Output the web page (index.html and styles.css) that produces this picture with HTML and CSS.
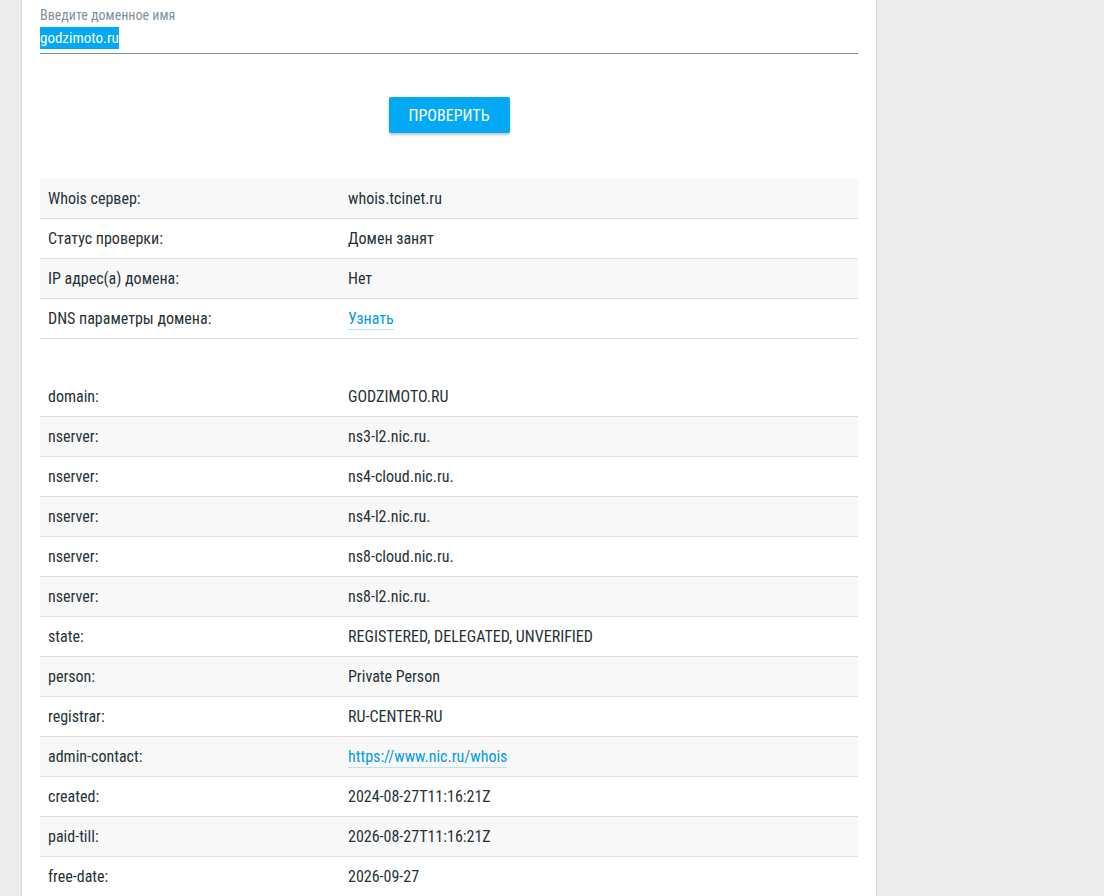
FILE: index.html
```html
<!DOCTYPE html>
<html lang="ru">
<head>
<meta charset="utf-8">
<title>Whois</title>
<link rel="stylesheet" href="styles.css">
</head>
<body>
<div class="page">
  <main class="card">
    <div class="field">
      <label class="field-label" for="domain">Введите доменное имя</label>
      <div class="field-input" id="domain"><span class="selected">godzimoto.ru</span></div>
    </div>
    <div class="actions">
      <button class="btn" type="button">ПРОВЕРИТЬ</button>
    </div>
    <table class="info striped-first">
      <tr><td>Whois сервер:</td><td>whois.tcinet.ru</td></tr>
      <tr><td>Статус проверки:</td><td>Домен занят</td></tr>
      <tr><td>IP адрес(а) домена:</td><td>Нет</td></tr>
      <tr><td>DNS параметры домена:</td><td><a class="link" href="#">Узнать</a></td></tr>
    </table>
    <table class="info striped-second whois">
      <tr><td>domain:</td><td>GODZIMOTO.RU</td></tr>
      <tr><td>nserver:</td><td>ns3-l2.nic.ru.</td></tr>
      <tr><td>nserver:</td><td>ns4-cloud.nic.ru.</td></tr>
      <tr><td>nserver:</td><td>ns4-l2.nic.ru.</td></tr>
      <tr><td>nserver:</td><td>ns8-cloud.nic.ru.</td></tr>
      <tr><td>nserver:</td><td>ns8-l2.nic.ru.</td></tr>
      <tr><td>state:</td><td>REGISTERED, DELEGATED, UNVERIFIED</td></tr>
      <tr><td>person:</td><td>Private Person</td></tr>
      <tr><td>registrar:</td><td>RU-CENTER-RU</td></tr>
      <tr><td>admin-contact:</td><td><a class="link" href="#">https://www.nic.ru/whois</a></td></tr>
      <tr><td>created:</td><td>2024-08-27T11:16:21Z</td></tr>
      <tr><td>paid-till:</td><td>2026-08-27T11:16:21Z</td></tr>
      <tr><td>free-date:</td><td>2026-09-27</td></tr>
    </table>
  </main>
</div>
</body>
</html>
```

FILE: styles.css
```css
html, body {
  margin: 0;
  padding: 0;
  background: #ececec;
}
body {
  font-family: "Roboto Condensed", Roboto, "Liberation Sans Narrow", sans-serif;
  font-stretch: condensed;
  color: #263238;
  font-size: 16px;
  overflow: hidden;
  height: 896px;
}
.page {
  padding-left: 22px;
}
.card {
  width: 818px;
  background: #fff;
  padding: 0 18px;
  min-height: 960px;
  box-shadow: -1px 0 1px #dcdcdc, 1px 0 1px #dcdcdc;
}
.field {
  padding-top: 6px;
}
.field-label {
  display: block;
  font-size: 14px;
  line-height: 18px;
  color: #7f919c;
}
.field-input {
  height: 29px;
  line-height: 28px;
  border-bottom: 1px solid #78909c;
  font-size: 15px;
}
.selected {
  background: #03a9f4;
  color: #fff;
  padding: 2px 0;
}
.actions {
  display: flex;
  justify-content: center;
  padding-top: 43px;
  padding-bottom: 46px;
}
.btn {
  font: inherit;
  font-stretch: condensed;
  font-size: 16px;
  color: #fff;
  background: #03a9f4;
  border: 0;
  border-radius: 2px;
  width: 121px;
  height: 36px;
  padding: 0;
  box-shadow: 0 2px 3px rgba(0,0,0,0.25);
}
.info {
  width: 100%;
  border-collapse: collapse;
}
.info td {
  height: 39px;
  padding: 0 8px;
  border-bottom: 1px solid #dedede;
  vertical-align: middle;
}
.info td:first-child {
  width: 284px;
}
.striped-first tr:nth-child(odd) td {
  background: #f8f8f8;
}
.striped-second tr:nth-child(even) td {
  background: #f8f8f8;
}
.whois {
  margin-top: 38px;
}
.link {
  color: #039be5;
  text-decoration: none;
  border-bottom: 1px solid #b3e5fc;
  padding-bottom: 1px;
}
```
